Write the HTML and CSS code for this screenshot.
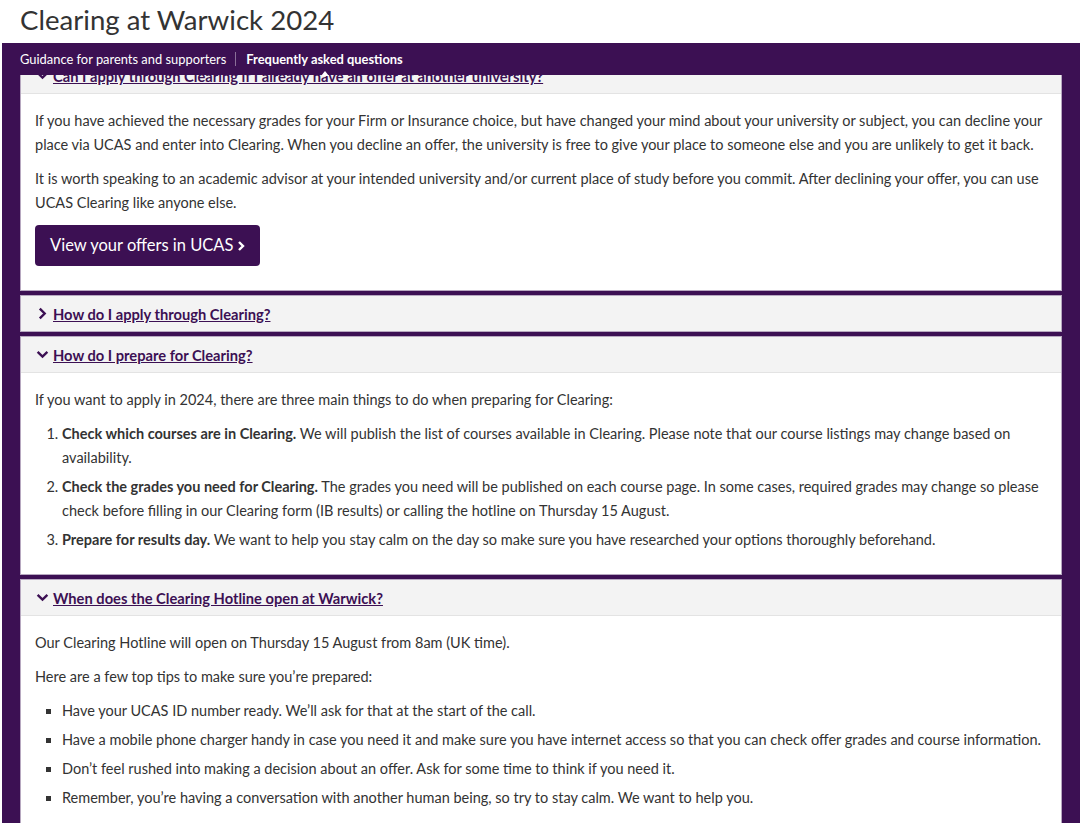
FILE: index.html
```html
<!DOCTYPE html>
<html lang="en">
<head>
    <meta charset="UTF-8">
    <meta name="viewport" content="width=device-width, initial-scale=1.0">
    <title>Clearing at Warwick 2024</title>
    <link rel="stylesheet" href="styles.css">
</head>
<body>
    <h1 class="page-title">Clearing at Warwick 2024</h1>

    <div class="band">
        <nav class="subnav">
            <a href="#">Guidance for parents and supporters</a>
            <span class="sep"></span>
            <a href="#" class="active">Frequently asked questions</a>
        </nav>

        <div class="faq-viewport">
            <div class="faq-list">
                <section class="faq">
                    <div class="faq-head">
                        <svg class="chev" viewBox="0 0 12 12"><polyline points="1.5,3.5 6,8 10.5,3.5"/></svg>
                        <a href="#">Can I apply through Clearing if I already have an offer at another university?</a>
                    </div>
                    <div class="faq-body">
                        <p>If you have achieved the necessary grades for your Firm or Insurance choice, but have changed your mind about your university or subject, you can decline your place via UCAS and enter into Clearing. When you decline an offer, the university is free to give your place to someone else and you are unlikely to get it back.</p>
                        <p>It is worth speaking to an academic advisor at your intended university and/or current place of study before you commit. After declining your offer, you can use UCAS Clearing like anyone else.</p>
                        <a href="#" class="btn">View your offers in UCAS <svg class="btn-chev" viewBox="0 0 8 12"><polyline points="2,2 6,6 2,10"/></svg></a>
                    </div>
                </section>

                <section class="faq">
                    <div class="faq-head closed">
                        <svg class="chev" viewBox="0 0 12 12"><polyline points="3.5,1.5 8,6 3.5,10.5"/></svg>
                        <a href="#">How do I apply through Clearing?</a>
                    </div>
                </section>

                <section class="faq">
                    <div class="faq-head">
                        <svg class="chev" viewBox="0 0 12 12"><polyline points="1.5,3.5 6,8 10.5,3.5"/></svg>
                        <a href="#">How do I prepare for Clearing?</a>
                    </div>
                    <div class="faq-body">
                        <p>If you want to apply in 2024, there are three main things to do when preparing for Clearing:</p>
                        <ol>
                            <li><strong>Check which courses are in Clearing.</strong> We will publish the list of courses available in Clearing. Please note that our course listings may change based on availability.</li>
                            <li><strong>Check the grades you need for Clearing.</strong> The grades you need will be published on each course page. In some cases, required grades may change so please check before filling in our Clearing form (IB results) or calling the hotline on Thursday 15 August.</li>
                            <li><strong>Prepare for results day.</strong> We want to help you stay calm on the day so make sure you have researched your options thoroughly beforehand.</li>
                        </ol>
                    </div>
                </section>

                <section class="faq">
                    <div class="faq-head">
                        <svg class="chev" viewBox="0 0 12 12"><polyline points="1.5,3.5 6,8 10.5,3.5"/></svg>
                        <a href="#">When does the Clearing Hotline open at Warwick?</a>
                    </div>
                    <div class="faq-body">
                        <p>Our Clearing Hotline will open on Thursday 15 August from 8am (UK time).</p>
                        <p>Here are a few top tips to make sure you’re prepared:</p>
                        <ul>
                            <li>Have your UCAS ID number ready. We’ll ask for that at the start of the call.</li>
                            <li>Have a mobile phone charger handy in case you need it and make sure you have internet access so that you can check offer grades and course information.</li>
                            <li>Don’t feel rushed into making a decision about an offer. Ask for some time to think if you need it.</li>
                            <li>Remember, you’re having a conversation with another human being, so try to stay calm. We want to help you.</li>
                        </ul>
                    </div>
                </section>
            </div>
        </div>
    </div>
</body>
</html>
```

FILE: styles.css
```css
body {
    margin: 0;
    font-family: Lato, "Open Sans", sans-serif;
    color: #333;
    background: #fff;
    overflow: hidden;
}
.page-title {
    margin: 0;
    height: 43px;
    padding-left: 20px;
    font-size: 27.6px;
    font-weight: 400;
    line-height: 40px;
    color: #333;
}
.band {
    margin-left: 2px;
    padding: 0 18px 0 18px;
    background: #3c1053;
}
.subnav {
    display: flex;
    align-items: center;
    height: 32px;
    font-size: 12.9px;
}
.subnav a {
    position: relative;
    color: #fff;
    text-decoration: none;
}
.subnav a.active {
    font-weight: 700;
}
/* little pointer under the current section */
.subnav a.active::after {
    content: "";
    position: absolute;
    left: 50%;
    bottom: -9px;
    margin-left: -4px;
    border: 4px solid transparent;
    border-top: 0;
    border-bottom: 5px solid #fff;
}
.subnav .sep {
    width: 1px;
    height: 14px;
    margin: 0 10px 0 9px;
    background: #8a6f98;
}
/* the list is scrolled a little, so the first header slides under the nav */
.faq-viewport {
    overflow: hidden;
}
.faq-list {
    margin-top: -18px;
}
.faq {
    background: #fff;
    border: 1px solid #b7a8c0;
    margin-bottom: 4px;
}
.faq-head {
    display: flex;
    align-items: center;
    height: 35px;
    padding: 0 15px;
    background: #f3f3f3;
    border-bottom: 1px solid #e3e3e3;
    font-size: 14.7px;
    font-weight: 700;
}
.faq-head.closed {
    border-bottom: 0;
}
.faq-head a {
    color: #3c1053;
}
.chev {
    width: 13px;
    height: 13px;
    margin-right: 4px;
    fill: none;
    stroke: #3c1053;
    stroke-width: 2.2;
}
.faq-body {
    padding: 15px 14px 15px;
    font-size: 14.5px;
    line-height: 24px;
}
.faq-body p {
    margin: 0 0 10px;
}
.faq-body ol,
.faq-body ul {
    margin: 0 0 7px;
    padding-left: 27px;
}
.faq-body ul {
    list-style: square;
}
.faq-body li {
    margin-bottom: 5px;
}
.btn {
    display: inline-flex;
    align-items: center;
    margin: 0 0 9px;
    padding: 8px 15px;
    border-radius: 4px;
    background: #3c1053;
    color: #fff;
    font-size: 16.5px;
    line-height: 25px;
    text-decoration: none;
}
.btn-chev {
    width: 8px;
    height: 12px;
    margin-left: 3px;
    fill: none;
    stroke: #fff;
    stroke-width: 2.4;
}
```
